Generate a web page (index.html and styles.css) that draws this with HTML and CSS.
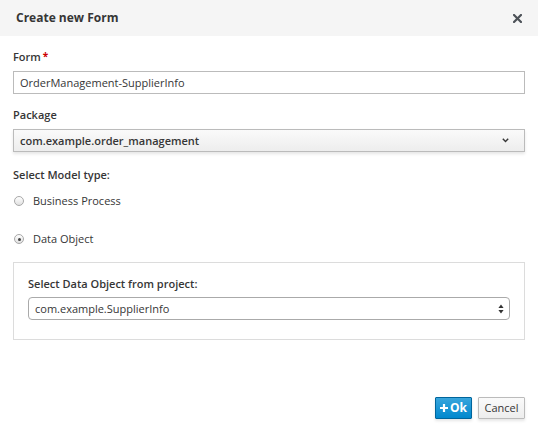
FILE: index.html
```html
<!DOCTYPE html>
<html>
<head>
<meta charset="utf-8">
<link rel="stylesheet" href="styles.css">
</head>
<body>
<div class="dialog">
  <div class="header">
    <span class="title">Create new Form</span>
    <span class="close"><svg width="9" height="9" viewBox="0 0 9 9"><path d="M1 1 L8 8 M8 1 L1 8" stroke="#4d5258" stroke-width="2.2" stroke-linecap="square"/></svg></span>
  </div>
  <div class="content">
    <div class="group">
      <div class="label">Form<span class="req">*</span></div>
      <div class="input">OrderManagement-SupplierInfo</div>
    </div>
    <div class="group">
      <div class="label">Package</div>
      <div class="select">
        <span>com.example.order_management</span>
        <svg class="chev" width="7" height="5" viewBox="0 0 7 5"><path d="M0.8 0.8 L3.5 3.6 L6.2 0.8" fill="none" stroke="#363636" stroke-width="1.4"/></svg>
      </div>
    </div>
    <div class="label section">Select Model type:</div>
    <div class="radio first"><span class="circle"></span>Business Process</div>
    <div class="radio second"><span class="circle checked"></span>Data Object</div>
    <div class="panel">
      <div class="label">Select Data Object from project:</div>
      <div class="native">
        <span>com.example.SupplierInfo</span>
        <svg class="updown" width="6" height="10" viewBox="0 0 6 10"><path d="M3 0.5 L5.6 4 L0.4 4 Z M3 9.5 L5.6 6 L0.4 6 Z" fill="#333"/></svg>
      </div>
    </div>
  </div>
  <div class="footer">
    <button class="btn primary"><svg class="plus" width="8" height="8" viewBox="0 0 8 8"><path d="M4 0 V8 M0 4 H8" stroke="#fff" stroke-width="2.2"/></svg>Ok</button>
    <button class="btn default">Cancel</button>
  </div>
</div>
</body>
</html>
```
FILE: styles.css
```css
html, body {
  margin: 0;
  padding: 0;
  background: #fff;
}
body {
  font-family: "Open Sans", "Liberation Sans", sans-serif;
  font-size: 11px;
  color: #363636;
}
.dialog {
  width: 538px;
  height: 432px;
}
.header {
  height: 36px;
  background: #f5f5f5;
  display: flex;
  align-items: center;
  justify-content: space-between;
  padding: 0 16px 0 16px;
  box-sizing: border-box;
}
.title {
  font-weight: 700;
  font-size: 12px;
  line-height: 16px;
}
.close {
  display: flex;
  width: 9px;
  height: 9px;
}
.content {
  padding: 13px 13px 0 13px;
}
.label {
  font-weight: 600;
  line-height: 16px;
  margin-bottom: 6px;
}
.req {
  color: #cc0000;
  margin-left: 2px;
  font-weight: 700;
  font-size: 10px;
  position: relative;
  top: -1px;
}
.group {
  margin-bottom: 13px;
}
.group:nth-child(2) {
  margin-bottom: 15px;
}
.input {
  height: 23px;
  box-sizing: border-box;
  border: 1px solid #bbb;
  padding: 0 6px;
  line-height: 21px;
  background: #fff;
}
.select {
  height: 23px;
  box-sizing: border-box;
  border: 1px solid #bbb;
  padding: 0 15px 0 6px;
  line-height: 21px;
  background: linear-gradient(to bottom, #fafafa 0%, #ededed 100%);
  box-shadow: 0 2px 3px rgba(3, 3, 3, 0.1);
  font-weight: 600;
  display: flex;
  justify-content: space-between;
  align-items: center;
}
.section {
  margin-bottom: 0;
}
.radio {
  display: flex;
  align-items: center;
  line-height: 18px;
  height: 18px;
}
.radio.first {
  margin-top: 9px;
}
.radio.second {
  margin-top: 20px;
}
.circle {
  width: 10px;
  height: 10px;
  box-sizing: border-box;
  border-radius: 50%;
  border: 1px solid #a8a8a8;
  background: linear-gradient(to bottom, #ffffff, #e0e0e0);
  margin: 0 9px 0 1px;
  position: relative;
}
.circle.checked::after {
  content: "";
  position: absolute;
  left: 2.5px;
  top: 2.5px;
  width: 3px;
  height: 3px;
  border-radius: 50%;
  background: #444;
}
.panel {
  margin-top: 14px;
  border: 1px solid #dcdcdc;
  padding: 13px 14px 19px 14px;
}
.panel .label {
  margin-bottom: 5px;
}
.native {
  height: 23px;
  box-sizing: border-box;
  border: 1px solid #aaa;
  border-radius: 4px;
  padding: 0 5px 0 6px;
  line-height: 21px;
  display: flex;
  justify-content: space-between;
  align-items: center;
  background: #fff;
}
.footer {
  margin-top: 57px;
  padding-right: 13px;
  display: flex;
  justify-content: flex-end;
  gap: 6px;
}
.btn {
  height: 22px;
  box-sizing: border-box;
  font-family: "Open Sans", "Liberation Sans", sans-serif;
  font-size: 12px;
  line-height: 20px;
  padding: 0;
  margin: 0;
  border-radius: 1px;
  box-shadow: 0 2px 3px rgba(3, 3, 3, 0.1);
  display: flex;
  align-items: center;
  justify-content: center;
}
.primary {
  width: 37px;
  color: #fff;
  font-weight: 700;
  background: linear-gradient(to bottom, #39a5dc 0%, #0088ce 100%);
  border: 1px solid #00659c;
}
.plus {
  margin-right: 2px;
}
.default {
  width: 47px;
  color: #363636;
  font-weight: 400;
  font-size: 11px;
  background: linear-gradient(to bottom, #fafafa 0%, #ededed 100%);
  border: 1px solid #bbb;
}
```
